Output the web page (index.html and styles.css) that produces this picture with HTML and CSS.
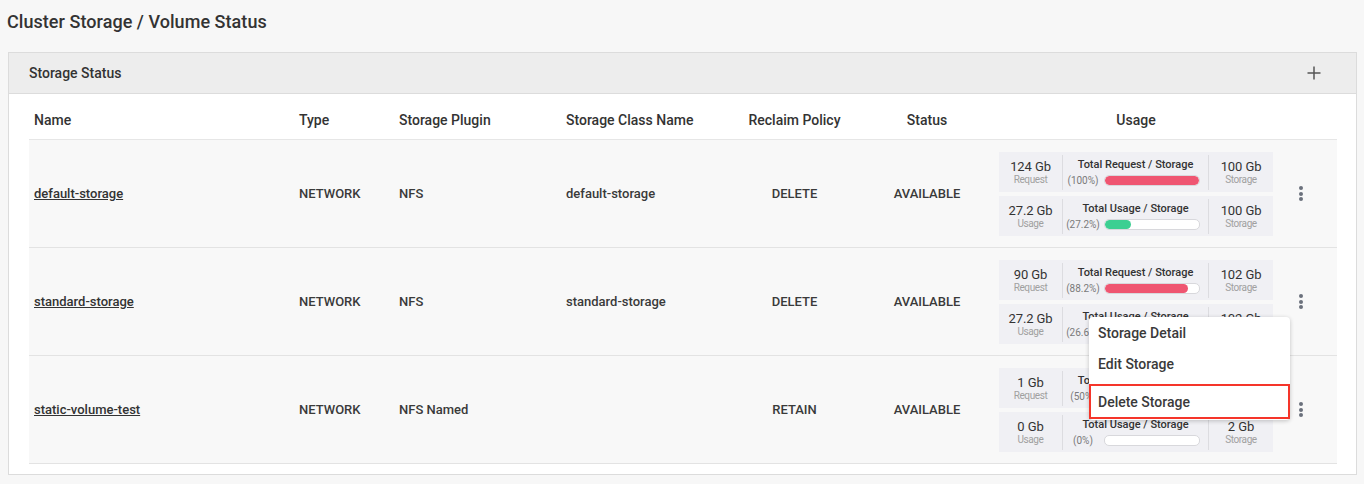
FILE: index.html
```html
<!DOCTYPE html>
<html lang="en">
<head>
<meta charset="utf-8">
<title>Cluster Storage / Volume Status</title>
<link rel="stylesheet" href="styles.css">
</head>
<body>
<div class="page">
  <h1 class="title">Cluster Storage / Volume Status</h1>
  <section class="panel">
    <div class="panel-head">
      <span class="panel-title">Storage Status</span>
      <span class="add" aria-label="Add">
        <svg width="16" height="16" viewBox="0 0 16 16"><path d="M8 1.5v13M1.5 8h13" stroke="#555" stroke-width="1.5" fill="none"/></svg>
      </span>
    </div>
    <div class="panel-body">
      <div class="grid head">
        <div class="cell">Name</div>
        <div class="cell">Type</div>
        <div class="cell">Storage Plugin</div>
        <div class="cell">Storage Class Name</div>
        <div class="cell center">Reclaim Policy</div>
        <div class="cell center">Status</div>
        <div class="cell center">Usage</div>
        <div class="cell"></div>
      </div>

      <div class="grid row">
        <div class="cell"><a class="name" href="#">default-storage</a></div>
        <div class="cell">NETWORK</div>
        <div class="cell">NFS</div>
        <div class="cell">default-storage</div>
        <div class="cell center">DELETE</div>
        <div class="cell center">AVAILABLE</div>
        <div class="cell usage">
          <div class="ubox">
            <div class="u-side"><span class="u-val">124 Gb</span><span class="u-lbl">Request</span></div>
            <div class="u-mid"><div class="u-title">Total Request / Storage</div><div class="u-bar"><span class="pct">(100%)</span><span class="track"><span class="fill red" style="width:100%"></span></span></div></div>
            <div class="u-side"><span class="u-val">100 Gb</span><span class="u-lbl">Storage</span></div>
          </div>
          <div class="ubox">
            <div class="u-side"><span class="u-val">27.2 Gb</span><span class="u-lbl">Usage</span></div>
            <div class="u-mid"><div class="u-title">Total Usage / Storage</div><div class="u-bar"><span class="pct">(27.2%)</span><span class="track"><span class="fill green" style="width:27.2%"></span></span></div></div>
            <div class="u-side"><span class="u-val">100 Gb</span><span class="u-lbl">Storage</span></div>
          </div>
        </div>
        <div class="cell kebab-cell"><span class="kebab"><i></i><i></i><i></i></span></div>
      </div>

      <div class="grid row">
        <div class="cell"><a class="name" href="#">standard-storage</a></div>
        <div class="cell">NETWORK</div>
        <div class="cell">NFS</div>
        <div class="cell">standard-storage</div>
        <div class="cell center">DELETE</div>
        <div class="cell center">AVAILABLE</div>
        <div class="cell usage">
          <div class="ubox">
            <div class="u-side"><span class="u-val">90 Gb</span><span class="u-lbl">Request</span></div>
            <div class="u-mid"><div class="u-title">Total Request / Storage</div><div class="u-bar"><span class="pct">(88.2%)</span><span class="track"><span class="fill red" style="width:88.2%"></span></span></div></div>
            <div class="u-side"><span class="u-val">102 Gb</span><span class="u-lbl">Storage</span></div>
          </div>
          <div class="ubox">
            <div class="u-side"><span class="u-val">27.2 Gb</span><span class="u-lbl">Usage</span></div>
            <div class="u-mid"><div class="u-title">Total Usage / Storage</div><div class="u-bar"><span class="pct">(26.6%)</span><span class="track"><span class="fill green" style="width:26.6%"></span></span></div></div>
            <div class="u-side"><span class="u-val">102 Gb</span><span class="u-lbl">Storage</span></div>
          </div>
        </div>
        <div class="cell kebab-cell">
          <span class="kebab"><i></i><i></i><i></i></span>
          <div class="menu">
            <div class="menu-item first">Storage Detail</div>
            <div class="menu-item">Edit Storage</div>
            <div class="menu-item danger">Delete Storage</div>
          </div>
        </div>
      </div>

      <div class="grid row">
        <div class="cell"><a class="name" href="#">static-volume-test</a></div>
        <div class="cell">NETWORK</div>
        <div class="cell">NFS Named</div>
        <div class="cell"></div>
        <div class="cell center">RETAIN</div>
        <div class="cell center">AVAILABLE</div>
        <div class="cell usage">
          <div class="ubox">
            <div class="u-side"><span class="u-val">1 Gb</span><span class="u-lbl">Request</span></div>
            <div class="u-mid"><div class="u-title">Total Request / Storage</div><div class="u-bar"><span class="pct">(50%)</span><span class="track"><span class="fill red" style="width:50%"></span></span></div></div>
            <div class="u-side"><span class="u-val">2 Gb</span><span class="u-lbl">Storage</span></div>
          </div>
          <div class="ubox">
            <div class="u-side"><span class="u-val">0 Gb</span><span class="u-lbl">Usage</span></div>
            <div class="u-mid"><div class="u-title">Total Usage / Storage</div><div class="u-bar"><span class="pct">(0%)</span><span class="track"><span class="fill green" style="width:0%"></span></span></div></div>
            <div class="u-side"><span class="u-val">2 Gb</span><span class="u-lbl">Storage</span></div>
          </div>
        </div>
        <div class="cell kebab-cell"><span class="kebab"><i></i><i></i><i></i></span></div>
      </div>
    </div>
  </section>
</div>
</body>
</html>
```

FILE: styles.css
```css
* { box-sizing: border-box; }
html, body { margin: 0; padding: 0; }
body {
  background: #f7f7f7;
  font-family: Roboto, "Liberation Sans", Arial, sans-serif;
  color: #333;
}
.page { padding: 0 8px; }
.title {
  margin: 0;
  height: 52px;
  padding-top: 10px;
  margin-left: -1px;
  font-size: 18px;
  line-height: 24px;
  font-weight: 500;
  letter-spacing: 0.05px;
  color: #333;
}
.panel {
  border: 1px solid #dcdcdc;
  background: #fff;
  width: 1349px;
}
.panel-head {
  height: 41px;
  background: #ededed;
  border-bottom: 1px solid #dcdcdc;
  display: flex;
  align-items: center;
  justify-content: space-between;
  padding: 0 34px 0 20px;
}
.panel-title { font-size: 14px; font-weight: 500; color: #333; }
.add { display: flex; width: 16px; height: 16px; }
.panel-body { padding: 6px 19px 10px 20px; }
.grid {
  display: grid;
  grid-template-columns: 265px 100px 167px 167px 133px 132px 286px 57px;
  align-items: center;
}
.head { height: 40px; border-bottom: 1px solid #e6e6e6; font-size: 14px; font-weight: 500; color: #333; }
.row { height: 108px; background: #f8f8f8; border-bottom: 1px solid #e3e3e3; font-size: 13px; font-weight: 500; color: #3a3a3a; }
.cell { padding-left: 5px; white-space: nowrap; }
.cell.center { text-align: center; padding-left: 0; }
.name { color: #333; text-decoration: underline; }
.usage { padding-left: 6px; display: flex; flex-direction: column; gap: 4px; }
.ubox {
  width: 274px;
  height: 40px;
  background: #f0f0f4;
  display: flex;
  padding: 3px 0 2px;
}
.u-side {
  width: 63px;
  display: flex;
  flex-direction: column;
  align-items: center;
  justify-content: center;
}
.u-side:last-child { width: 64px; }
.u-val { font-size: 13px; font-weight: 400; color: #333; line-height: 15px; letter-spacing: -0.1px; }
.u-lbl { font-size: 10px; font-weight: 400; color: #a0a0a0; line-height: 11px; letter-spacing: -0.4px; }
.u-mid {
  width: 147px;
  border-left: 1px solid #dcdce0;
  border-right: 1px solid #dcdce0;
  padding: 0 8px 0 1px;
  display: flex;
  flex-direction: column;
  justify-content: center;
}
.u-title { font-size: 11px; font-weight: 500; color: #333; text-align: center; line-height: 14px; padding-left: 7px; }
.u-bar { display: flex; align-items: center; margin-top: 3px; }
.pct { width: 38px; text-align: center; font-size: 10px; font-weight: 400; color: #7a7a7a; }
.track {
  margin-left: 2px;
  flex: 1;
  height: 11px;
  border: 1px solid #d8d8dc;
  border-radius: 5px;
  background: #fff;
  overflow: hidden;
  display: flex;
}
.fill { height: 100%; border-radius: 5px; }
.fill.red { background: #ef5571; }
.fill.green { background: #3ccf92; }
.kebab-cell {
  position: relative;
  align-self: stretch;
  display: flex;
  align-items: center;
  padding-left: 20px;
}
.kebab { display: flex; flex-direction: column; gap: 1.5px; width: 4px; }
.kebab i { display: block; width: 4px; height: 4px; border-radius: 50%; background: #6b717c; }
.menu {
  position: absolute;
  z-index: 10;
  left: -190px;
  top: 69px;
  width: 201px;
  background: #fff;
  border-radius: 4px;
  box-shadow: 0 1px 4px rgba(0,0,0,0.22);
  padding-bottom: 1px;
}
.menu-item {
  height: 31px;
  line-height: 31px;
  padding-left: 9px;
  font-size: 14px;
  font-weight: 500;
  color: #3a3a3a;
}
.menu-item.first { height: 32px; line-height: 32px; }
.menu-item.danger {
  margin-top: 4px;
  height: 35px;
  line-height: 32px;
  border: 2px solid #f5352a;
  padding-left: 7px;
}
```
